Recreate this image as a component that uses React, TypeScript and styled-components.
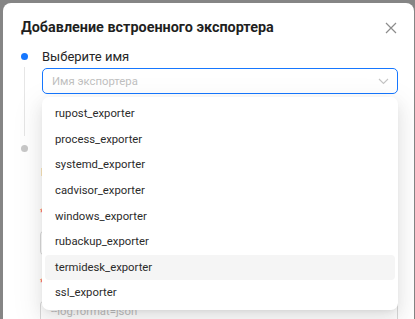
import styled, { createGlobalStyle } from 'styled-components'

const GlobalStyle = createGlobalStyle`
  html, body {
    margin: 0;
    padding: 0;
    background: #858585;
    font-family: Roboto, "Noto Sans", "Liberation Sans", sans-serif;
    overflow: hidden;
  }
`

const Backdrop = styled.div`
  width: 415px;
  height: 319px;
  padding: 3px 1px 0 3px;
  box-sizing: border-box;
  overflow: hidden;
`

const Modal = styled.div`
  position: relative;
  background: #fff;
  border-radius: 8px;
  height: 340px;
  padding: 14px 16px 0 18px;
  box-sizing: border-box;
`

const Title = styled.h2`
  margin: 0;
  font-size: 14.4px;
  font-weight: 700;
  line-height: 22px;
  color: #1f1f1f;
`

const CloseButton = styled.button`
  position: absolute;
  top: 14px;
  right: 12px;
  width: 22px;
  height: 22px;
  padding: 0;
  border: none;
  background: transparent;
  display: flex;
  align-items: center;
  justify-content: center;
`

const Steps = styled.div`
  margin-top: 8px;
  display: flex;
  flex-direction: column;
`

const Step = styled.div<{ $last?: boolean }>`
  display: grid;
  grid-template-columns: 21px 1fr;
  position: relative;
  padding-bottom: ${p => (p.$last ? 0 : 45)}px;
`

const Rail = styled.div<{ $last?: boolean }>`
  position: relative;
  &::after {
    content: '';
    display: ${p => (p.$last ? 'none' : 'block')};
    position: absolute;
    left: 3px;
    top: 20px;
    bottom: -42px;
    width: 1px;
    background: #e6e6e6;
  }
`

const Dot = styled.span<{ $active?: boolean }>`
  display: block;
  margin-top: 6px;
  width: 7px;
  height: 7px;
  border-radius: 50%;
  background: ${p => (p.$active ? '#1677ff' : '#c8c8c8')};
`

const StepBody = styled.div`
  display: flex;
  flex-direction: column;
`

const StepLabel = styled.div<{ $muted?: boolean }>`
  font-size: 13px;
  line-height: 20px;
  color: ${p => (p.$muted ? '#8c8c8c' : '#262626')};
`

const SelectWrap = styled.div`
  position: relative;
  margin-top: 1px;
`

const SelectBox = styled.div`
  height: 26px;
  border: 1px solid #1677ff;
  border-radius: 5px;
  box-sizing: border-box;
  display: flex;
  align-items: center;
  justify-content: space-between;
  padding: 0 8px 0 9px;
`

const Placeholder = styled.span`
  font-size: 11.3px;
  color: #bfbfbf;
`

const Menu = styled.ul`
  position: absolute;
  z-index: 10;
  top: 29px;
  left: 0;
  right: 0;
  margin: 0;
  padding: 4px 3px;
  list-style: none;
  background: #fff;
  border-radius: 7px;
  box-shadow: 0 6px 16px 0 rgba(0, 0, 0, 0.08), 0 3px 6px -4px rgba(0, 0, 0, 0.12),
    0 9px 28px 8px rgba(0, 0, 0, 0.05);
`

const Option = styled.li<{ $hover?: boolean }>`
  height: 25.6px;
  display: flex;
  align-items: center;
  padding: 0 10px;
  border-radius: 4px;
  font-size: 11.3px;
  color: #2b2b2b;
  background: ${p => (p.$hover ? '#f5f5f5' : 'transparent')};
`

const Hint = styled.div`
  margin-top: 6px;
  margin-left: -1px;
  font-size: 11px;
  line-height: 16px;
  color: #595959;
`

const FieldLabel = styled.div<{ $gap: number }>`
  margin-top: ${p => p.$gap}px;
  margin-left: -2px;
  font-size: 11px;
  line-height: 16px;
  color: #262626;
  &::before {
    content: '* ';
    color: #ff4d4f;
  }
`

const Input = styled.div<{ $height: number }>`
  margin-top: 9px;
  margin-left: -2px;
  height: ${p => p.$height}px;
  border: 1px solid #d9d9d9;
  border-radius: 5px;
  box-sizing: border-box;
  padding: 3px 10px;
  font-size: 11.3px;
  line-height: 16px;
  color: #bfbfbf;
`

const options = [
  'rupost_exporter',
  'process_exporter',
  'systemd_exporter',
  'cadvisor_exporter',
  'windows_exporter',
  'rubackup_exporter',
  'termidesk_exporter',
  'ssl_exporter',
]

const App = () => (
  <>
    <GlobalStyle />
    <Backdrop>
      <Modal>
        <Title>Добавление встроенного экспортера</Title>
        <CloseButton aria-label="close">
          <svg width="12" height="12" viewBox="0 0 12 12">
            <path d="M1 1L11 11M11 1L1 11" stroke="#8c8c8c" strokeWidth="1.2" />
          </svg>
        </CloseButton>
        <Steps>
          <Step>
            <Rail>
              <Dot $active />
            </Rail>
            <StepBody>
              <StepLabel>Выберите имя</StepLabel>
              <SelectWrap>
                <SelectBox>
                  <Placeholder>Имя экспортера</Placeholder>
                  <svg width="11" height="7" viewBox="0 0 11 7">
                    <path d="M1 1L5.5 5.5L10 1" stroke="#c4c4c4" strokeWidth="1.1" fill="none" />
                  </svg>
                </SelectBox>
                <Menu>
                  {options.map(o => (
                    <Option key={o} $hover={o === 'termidesk_exporter'}>
                      {o}
                    </Option>
                  ))}
                </Menu>
              </SelectWrap>
            </StepBody>
          </Step>
          <Step $last>
            <Rail $last>
              <Dot />
            </Rail>
            <StepBody>
              <StepLabel $muted>Задайте параметры</StepLabel>
              <Hint>Параметры запуска</Hint>
              <FieldLabel $gap={24}>Порт</FieldLabel>
              <Input $height={26}>9100</Input>
              <FieldLabel $gap={19}>Аргументы</FieldLabel>
              <Input $height={28}>--log.format=json</Input>
            </StepBody>
          </Step>
        </Steps>
      </Modal>
    </Backdrop>
  </>
)

export default App
